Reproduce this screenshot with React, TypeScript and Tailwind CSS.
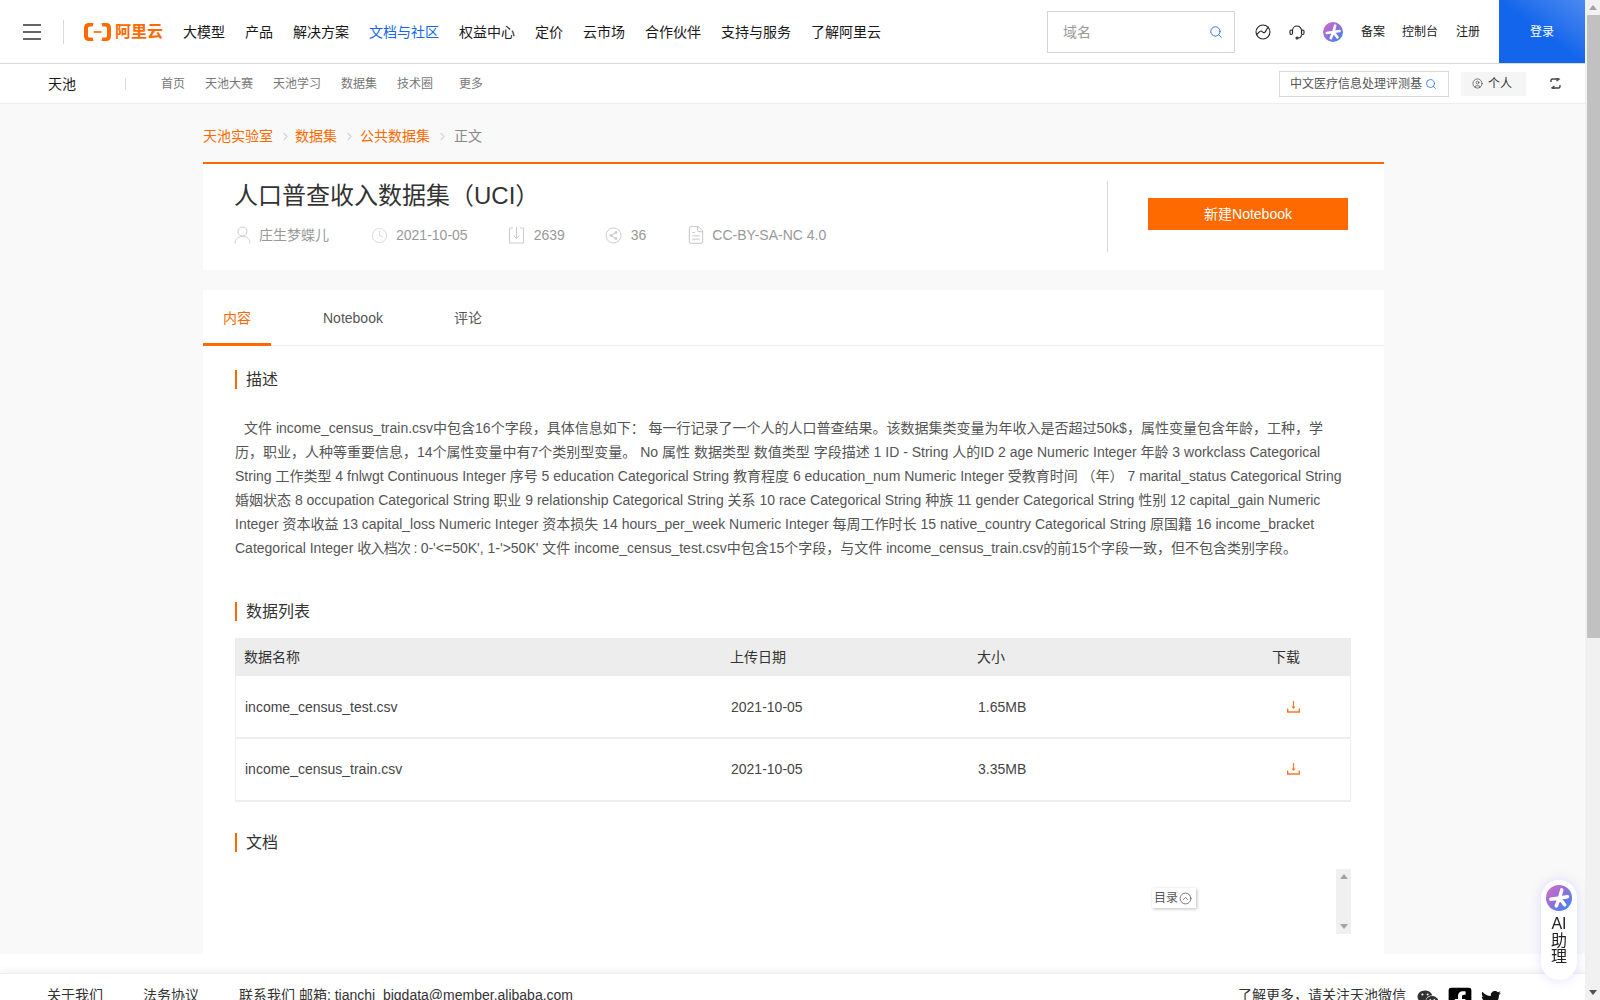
import { ChevronRight, CircleChevronUp, CircleUser, Clock, FileText, Search } from "lucide-react";
import { FaFacebookSquare, FaTwitter, FaWeixin } from "react-icons/fa";

const mainNav = ["大模型", "产品", "解决方案", "文档与社区", "权益中心", "定价", "云市场", "合作伙伴", "支持与服务", "了解阿里云"];
const subNav = ["首页", "天池大赛", "天池学习", "数据集", "技术圈"];
const files = [
  { name: "income_census_test.csv", size: "1.65MB", pad: "pt-0" },
  { name: "income_census_train.csv", size: "3.35MB", pad: "pb-[2px]" },
];

const StarLogo = ({ size }: { size: number }) => (
  <svg width={size} height={size} viewBox="0 0 26 26" className="shrink-0">
    <defs>
      <linearGradient id={`star-${size}`} x1="0" y1="0" x2="1" y2="1">
        <stop offset="0" stopColor="#e06cb8" />
        <stop offset="0.5" stopColor="#8d6fe0" />
        <stop offset="1" stopColor="#2f8cf5" />
      </linearGradient>
    </defs>
    <circle cx="13" cy="13" r="13" fill={`url(#star-${size})`} />
    <path
      d="M13.500 13L15.800 4.800M13.500 13L21.500 11.800M13.500 13L18.800 20M13.500 13L10.200 21M13.500 13L4.800 14.200"
      fill="none"
      stroke="#fff"
      strokeWidth="3.400"
      strokeLinecap="round"
    />
  </svg>
);

const Heading = ({ children }: { children: string }) => (
  <h2 className="flex h-[19px] items-center border-l-2 border-[#ff6a00] pl-[9px] text-base font-normal text-[#333]">{children}</h2>
);

const DownloadIcon = () => (
  <svg width="13" height="12" viewBox="0 0 13 12" className="ml-[14px]" fill="none" stroke="#ff7a1f">
    <path d="M6.500 0v7" strokeWidth="1.200" />
    <path d="M4.500 5.500h4L6.500 8z" fill="#ff7a1f" stroke="none" />
    <path d="M.7 7.500v3.500h11.600V7.500" strokeWidth="1.400" />
  </svg>
);

const App = () => {
  return (
    <div className="relative flex h-screen w-full overflow-hidden bg-white font-['Liberation_Sans','Noto_Sans_CJK_SC',sans-serif]">
      <div className="flex min-w-0 flex-1 flex-col">
        <header className="flex h-[64px] shrink-0 items-center border-b border-[#d9d9d9] pl-[23px]">
          <div className="flex h-4 w-[18px] flex-col justify-between">
            <span className="h-0.5 bg-[#666]" />
            <span className="h-0.5 bg-[#666]" />
            <span className="h-0.5 bg-[#666]" />
          </div>
          <span className="ml-[22px] h-6 w-px bg-[#d9d9d9]" />
          <svg width="27" height="18" viewBox="0 0 27 18" className="ml-5" fill="#ff6a00">
            <path d="M9.500 0H5Q0 0 0 5v8q0 5 5 5h4.500l-.9-3.500H5.600q-1.600 0-1.600-1.600V5.100q0-1.600 1.600-1.600h3z" />
            <path d="M17.500 0H22q5 0 5 5v8q0 5-5 5h-4.500l.9-3.500h3q1.600 0 1.600-1.600V5.100q0-1.600-1.600-1.600h-3z" />
            <rect x="9.500" y="8.200" width="8" height="1.600" />
          </svg>
          <span className="ml-1 text-base font-bold text-[#ff6a00]">阿里云</span>
          <nav className="ml-5 flex gap-5 text-sm text-[#181818]">
            {mainNav.map((i) => (
              <a key={i} className={i === "文档与社区" ? "text-[#1366ec]" : ""}>
                {i}
              </a>
            ))}
          </nav>
          <div className="ml-auto flex h-[42px] w-[188px] items-center justify-between border border-[#d4d4d4] pl-[15px] pr-[11px] text-sm text-[#999]">
            域名
            <Search size={14} color="#1366ec" strokeWidth={1.5} />
          </div>
          <svg width="16" height="16" viewBox="0 0 16 16" className="ml-5" fill="none" stroke="#222" strokeWidth="1.100">
            <circle cx="8" cy="8" r="7" />
            <path d="M1.500 10.500c2-.5 2.500-3.500 4.500-3.500s1.500 2.500 3.500 1.500S11 4 14 3" />
          </svg>
          <svg width="16" height="16" viewBox="0 0 16 16" className="ml-[18px]" fill="none" stroke="#222" strokeWidth="1.100">
            <path d="M3.500 9V6.500a4.500 4.500 0 0 1 9 0V9" />
            <rect x="1" y="6" width="2.500" height="4.500" rx="1.200" />
            <rect x="12.500" y="6" width="2.500" height="4.500" rx="1.200" />
            <path d="M12.500 10.500c0 2.500-2 3.500-3.500 3.500" />
            <circle cx="8" cy="14" r="1" />
          </svg>
          <span className="ml-[18px]">
            <StarLogo size={20} />
          </span>
          <a className="ml-[18px] text-xs text-[#181818]">备案</a>
          <a className="ml-[17px] text-xs text-[#181818]">控制台</a>
          <a className="ml-[18px] text-xs text-[#181818]">注册</a>
          <a className="ml-[19px] flex h-[63px] w-[86px] items-center justify-center bg-gradient-to-tr from-[#1366ec] from-50% to-[#4a8af0] text-xs text-white">
            登录
          </a>
        </header>

        <div className="flex h-[40px] shrink-0 items-center border-b border-[#eee] pl-[48px] pr-[24px]">
          <span className="text-sm text-[#181818]">天池</span>
          <span className="ml-[49px] h-3 w-px bg-[#d9d9d9]" />
          <nav className="ml-[35px] flex gap-5 text-xs text-[#777]">
            {subNav.map((i) => (
              <a key={i}>{i}</a>
            ))}
            <a className="ml-[6px]">更多</a>
          </nav>
          <div className="ml-auto flex h-[26px] w-[170px] items-center justify-between overflow-hidden border border-[#d9d9d9] pl-[10px] pr-[11px] text-xs text-[#555]">
            <span className="w-[132px] overflow-hidden whitespace-nowrap">中文医疗信息处理评测基准</span>
            <Search size={12} color="#1366ec" strokeWidth={1.5} />
          </div>
          <div className="ml-3 flex h-6 w-[65px] items-center gap-[5px] bg-[#f5f5f5] pl-[11px] text-xs text-[#333]">
            <CircleUser size={11} strokeWidth={1.5} color="#444" />
            个人
          </div>
          <svg width="11" height="11" viewBox="0 0 11 11" className="ml-6" fill="none" stroke="#444" strokeWidth="1.400">
            <path d="M1 4V2.500A1.500 1.500 0 0 1 2.500 1H8" />
            <path d="M6.500 0L9 1.200 6.500 3" />
            <path d="M10 7v1.500A1.500 1.500 0 0 1 8.500 10H3" />
            <path d="M4.500 8L2 9.800 4.500 11" />
          </svg>
        </div>

        <main className="h-[850px] shrink-0 overflow-hidden bg-[#f9f9f9]">
          <div className="ml-[203px] w-[1181px]">
            <div className="flex h-[58px] items-center pt-[6px] text-sm text-[#ff6a00]">
              <a>天池实验室</a>
              <ChevronRight size={13} strokeWidth={1.5} className="ml-[6px] mr-[3px] text-[#aaa]" />
              <a>数据集</a>
              <ChevronRight size={13} strokeWidth={1.5} className="ml-[6px] mr-1 text-[#aaa]" />
              <a>公共数据集</a>
              <ChevronRight size={13} strokeWidth={1.5} className="ml-[6px] mr-[5px] text-[#aaa]" />
              <span className="text-[#888]">正文</span>
            </div>

            <section className="flex h-[108px] border-t-2 border-[#ff6a00] bg-white pl-[31px]">
              <div className="w-[873px] pt-4">
                <h1 className="text-2xl leading-[32px] font-normal text-[#333]">人口普查收入数据集（UCI）</h1>
                <div className="mt-[13px] flex h-5 items-center text-sm text-[#999]">
                  <svg width="17" height="18" viewBox="0 0 17 18" className="mr-2" fill="none" stroke="#ccc">
                    <circle cx="8.500" cy="5.500" r="4.500" />
                    <path d="M1 17.500c0-4.500 3-7 7.500-7s7.500 2.500 7.500 7" />
                  </svg>
                  庄生梦蝶儿
                  <Clock size={17} strokeWidth={1} className="ml-[42px] mr-2 text-[#ccc]" />
                  2021-10-05
                  <svg width="17" height="18" viewBox="0 0 17 18" className="ml-[40px] mr-[9px]" fill="none" stroke="#ccc">
                    <path d="M5 2H1.500v15h14V2H12M8.500 1v11M5.500 9.500l3 3 3-3" />
                  </svg>
                  2639
                  <svg width="17" height="17" viewBox="0 0 17 17" className="ml-[40px] mr-[9px]" fill="none" stroke="#ccc">
                    <circle cx="8.500" cy="8.500" r="7.500" />
                    <path d="M11 5.500l-5 3 5 3" />
                    <circle cx="11" cy="5.500" r="1" fill="#ccc" />
                    <circle cx="6" cy="8.500" r="1" fill="#ccc" />
                    <circle cx="11" cy="11.500" r="1" fill="#ccc" />
                  </svg>
                  36
                  <FileText size={20} strokeWidth={1} className="ml-10 mr-[6px] text-[#bbb]" />
                  CC-BY-SA-NC 4.0
                </div>
              </div>
              <div className="mt-[17px] h-[71px] border-l border-[#d9d9d9] pl-10 pt-[17px]">
                <button className="h-8 w-[200px] bg-[#ff6a00] text-sm text-white">新建Notebook</button>
              </div>
            </section>

            <section className="mt-5 bg-white pb-5">
              <div className="flex h-[56px] border-b border-[#eee] text-sm text-[#555]">
                <a className="mb-[-1px] flex w-[68px] items-center justify-center border-b-[3px] border-[#ff6a00] pt-[3px] text-[#ff6a00]">内容</a>
                <a className="ml-[52px] flex items-center">Notebook</a>
                <a className="ml-[71px] flex items-center">评论</a>
              </div>
              <div className="px-8 pt-6">
                <Heading>描述</Heading>
                <p className="mt-[27px] whitespace-nowrap text-sm leading-6 text-[#555]">
                  <span className="pl-[9px]">文件</span> income_census_train.csv中包含16个字段，具体信息如下： 每一行记录了一个人的人口普查结果。该数据集类变量为年收入是否超过50k$，属性变量包含年龄，工种，学
                  <br />
                  历，职业，人种等重要信息，14个属性变量中有7个类别型变量。 No 属性 数据类型 数值类型 字段描述 1 ID - String 人的ID 2 age Numeric Integer 年龄 3 workclass Categorical
                  <br />
                  String 工作类型 4 fnlwgt Continuous Integer 序号 5 education Categorical String 教育程度 6 education_num Numeric Integer 受教育时间 （年） 7 marital_status Categorical String
                  <br />
                  婚姻状态 8 occupation Categorical String 职业 9 relationship Categorical String 关系 10 race Categorical String 种族 11 gender Categorical String 性别 12 capital_gain Numeric
                  <br />
                  Integer 资本收益 13 capital_loss Numeric Integer 资本损失 14 hours_per_week Numeric Integer 每周工作时长 15 native_country Categorical String 原国籍 16 income_bracket
                  <br />
                  Categorical Integer <span className="tracking-[-0.7px]">收入档次 :</span> 0-'&lt;=50K', 1-'&gt;50K' 文件 income_census_test.csv中包含15个字段，与文件 income_census_train.csv的前15个字段一致，但不包含类别字段。
                </p>

                <div className="mt-[42px]">
                  <Heading>数据列表</Heading>
                </div>
                <div className="mt-[17px] w-[1116px] text-sm">
                  <div className="grid h-[38px] grid-cols-[495px_247px_295px_79px] items-center bg-[#ededed] text-[#333]">
                    <span className="pl-[9px]">数据名称</span>
                    <span>上传日期</span>
                    <span>大小</span>
                    <span>下载</span>
                  </div>
                  {files.map((i) => (
                    <div
                      key={i.name}
                      className={`grid h-[63px] grid-cols-[495px_247px_295px_79px] items-center border-x border-b-2 border-[#eee] text-[#444] ${i.pad}`}
                    >
                      <span className="pl-[9px]">{i.name}</span>
                      <span>2021-10-05</span>
                      <span>{i.size}</span>
                      <DownloadIcon />
                    </div>
                  ))}
                </div>

                <div className="mt-[31px]">
                  <Heading>文档</Heading>
                </div>
                <div className="relative mt-[17px] flex h-[65px] w-[1116px] justify-end">
                  <div className="flex w-[15px] flex-col items-center justify-between bg-[#f0f0f0] py-[5px]">
                    <span className="h-0 w-0 border-x-[4px] border-b-[5px] border-x-transparent border-b-[#a3a3a3]" />
                    <span className="h-0 w-0 border-x-[4px] border-t-[5px] border-x-transparent border-t-[#a3a3a3]" />
                  </div>
                  <div className="absolute left-[917px] top-[19px] flex h-5 w-11 items-center gap-px bg-white pl-[2px] text-xs text-[#555] shadow-[1px_1px_3px_rgba(0,0,0,0.25)]">
                    目录
                    <CircleChevronUp size={13} strokeWidth={1.3} color="#444" />
                  </div>
                </div>
              </div>
            </section>
          </div>
        </main>

        <div className="h-[19px] shrink-0 bg-white" />
        <footer className="flex h-[40px] shrink-0 items-start border-t border-[#eee] bg-white pl-[47px] pr-[84px] pt-[11px] text-sm text-[#333] shadow-[0_-3px_6px_rgba(0,0,0,0.05)]">
          <a>关于我们</a>
          <a className="ml-10">法务协议</a>
          <a className="ml-10">联系我们 邮箱: tianchi_bigdata@member.alibaba.com</a>
          <span className="ml-auto">了解更多，请关注天池微信</span>
          <FaWeixin size={22} color="#333" className="ml-[11px] mt-[3px]" />
          <FaFacebookSquare size={26} color="#000" className="ml-2 mt-px" />
          <FaTwitter size={20} color="#111" className="ml-2 mt-1" />
        </footer>
      </div>

      <div className="flex w-[15px] shrink-0 flex-col items-center bg-[#f1f1f1]">
        <span className="mt-[5px] h-0 w-0 border-x-[4px] border-b-[5px] border-x-transparent border-b-[#a3a3a3]" />
        <span className="ml-[2px] mt-[5px] h-[623px] w-[13px] bg-[#c1c1c1]" />
        <span className="mb-[5px] mt-auto h-0 w-0 border-x-[4px] border-t-[5px] border-x-transparent border-t-[#505050]" />
      </div>

      <div className="fixed left-[1541px] top-[880px] flex h-[100px] w-9 flex-col items-center rounded-full bg-white pt-[5px] text-base leading-[16.500px] text-[#222] shadow-[0_0_12px_rgba(120,110,255,0.22)]">
        <StarLogo size={26} />
        <span className="mt-[5px] text-center">
          AI
          <br />助
          <br />理
        </span>
      </div>
    </div>
  );
};

export default App;
